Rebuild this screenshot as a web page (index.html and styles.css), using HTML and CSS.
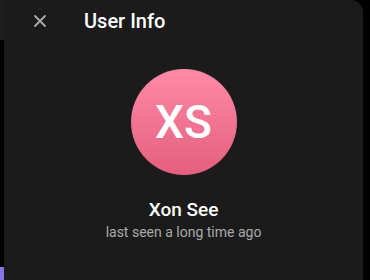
FILE: index.html
```html
<!DOCTYPE html>
<html lang="en">
<head>
  <meta charset="UTF-8" />
  <meta name="viewport" content="width=device-width, initial-scale=1.0" />
  <title>User Info</title>
  <link rel="stylesheet" href="styles.css">
</head>
<body>
  <div class="screen">
    <div class="edge">
      <div class="edge-top"></div>
      <div class="edge-tab"></div>
    </div>

    <section class="panel">
      <header class="panel-header">
        <button class="close-btn" aria-label="Close">
          <svg width="16" height="16" viewBox="0 0 16 16">
            <path d="M3 3 L13 13 M13 3 L3 13" stroke="#aaaaaa" stroke-width="1.8" stroke-linecap="round" fill="none"/>
          </svg>
        </button>
        <h1 class="title">User Info</h1>
      </header>

      <div class="profile">
        <div class="avatar">XS</div>
        <div class="name">Xon See</div>
        <div class="status">last seen a long time ago</div>
      </div>
    </section>
  </div>
</body>
</html>
```

FILE: styles.css
```css
body {
  margin: 0;
  padding: 0;
  background-color: #000;
  font-family: Roboto, 'Noto Sans', sans-serif;
}
.screen {
  display: flex;
  width: 370px;
  height: 280px;
  overflow: hidden;
}
.edge {
  width: 4px;
  display: flex;
  flex-direction: column;
}
.edge-top {
  height: 40px;
  background-color: #1e1e1e;
}
.edge-tab {
  margin-top: auto;
  height: 13px;
  background-color: #8774e1;
}
.panel {
  width: 359px;
  background-color: #1b1b1b;
  border-top-right-radius: 12px;
  display: flex;
  flex-direction: column;
}
.panel-header {
  display: flex;
  align-items: center;
  height: 42px;
  padding-left: 24px;
}
.close-btn {
  background: none;
  border: none;
  padding: 0;
  width: 24px;
  height: 24px;
  display: flex;
  align-items: center;
  justify-content: center;
  cursor: pointer;
}
.title {
  margin: 0 0 0 32px;
  font-size: 20px;
  font-weight: 500;
  color: #fff;
}
.profile {
  display: flex;
  flex-direction: column;
  align-items: center;
  padding-top: 27px;
}
.avatar {
  width: 106px;
  height: 106px;
  border-radius: 50%;
  background: linear-gradient(#ff8aa8, #e35f7d);
  color: #fff;
  font-size: 46px;
  font-weight: 500;
  display: flex;
  align-items: center;
  justify-content: center;
}
.name {
  margin-top: 23px;
  font-size: 19px;
  font-weight: 500;
  color: #fff;
}
.status {
  margin-top: 3px;
  font-size: 14px;
  color: #aaaaaa;
}
```
